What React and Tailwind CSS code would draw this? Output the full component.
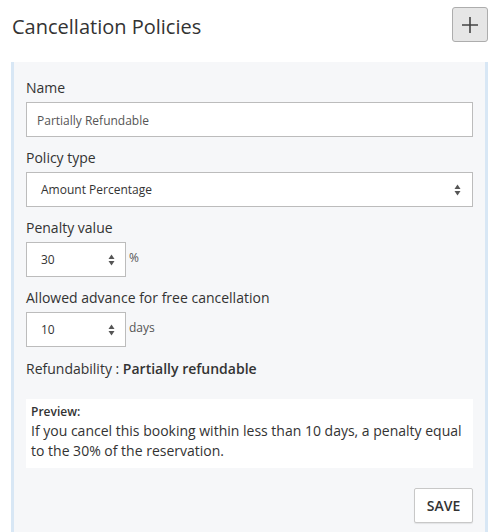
import React from 'react';

const font = { fontFamily: '"Open Sans", "Liberation Sans", sans-serif' };

function Spinner() {
  return (
    <svg width="7" height="12" viewBox="0 0 7 12" className="shrink-0">
      <path d="M3.5 0.5 L6.5 5 L0.5 5 Z" fill="#555" />
      <path d="M3.5 11.5 L6.5 7 L0.5 7 Z" fill="#555" />
    </svg>
  );
}

function NumberField({ value, unit }) {
  return (
    <div className="flex items-start">
      <div className="flex h-[35px] w-[100px] items-center justify-between border border-[#bcbcbc] bg-white pl-[14px] pr-[10px] pt-[1px] text-[12px] text-[#333]">
        <span>{value}</span>
        <Spinner />
      </div>
      <span className="ml-[3px] mt-[8px] text-[12px] leading-4 text-[#555]">{unit}</span>
    </div>
  );
}

function Label({ children }) {
  return <div className="mb-[4px] text-[14px] leading-5 text-[#333]">{children}</div>;
}

export default function App() {
  return (
    <div className="min-h-[532px] bg-white" style={font}>
      <div className="flex h-[62px] items-start justify-between pl-[12px] pr-[5px] pt-[7px]">
        <h1 className="mt-[6px] text-[20px] leading-7 text-[#333]">Cancellation Policies</h1>
        <button
          type="button"
          className="flex h-[35px] w-[36px] items-center justify-center rounded-[3px] border border-[#adadad] bg-[#e6e6e6]"
        >
          <svg width="18" height="18" viewBox="0 0 18 18">
            <path d="M9 1 V17 M1 9 H17" stroke="#444" strokeWidth="1.6" />
          </svg>
        </button>
      </div>

      <div className="ml-[11px] mr-[5px] min-h-[470px] border-x-[3px] border-[#d8e7f5] bg-[#f6f7f9] px-[12px] pb-[12px] pt-[16px]">
        <Label>Name</Label>
        <div className="flex h-[35px] items-center border border-[#bcbcbc] bg-white pl-[10px] pt-[2px] text-[12px] text-[#555]">
          Partially Refundable
        </div>

        <div className="mt-[11px]">
          <Label>Policy type</Label>
          <div className="flex h-[35px] items-center justify-between border border-[#bcbcbc] bg-white pl-[14px] pr-[11px] pt-[1px] text-[12px] text-[#333]">
            <span>Amount Percentage</span>
            <Spinner />
          </div>
        </div>

        <div className="mt-[11px]">
          <Label>Penalty value</Label>
          <NumberField value="30" unit="%" />
        </div>

        <div className="mt-[11px]">
          <Label>Allowed advance for free cancellation</Label>
          <NumberField value="10" unit="days" />
        </div>

        <div className="mt-[12px] text-[14px] leading-5 text-[#333]">
          Refundability : <span className="font-semibold">Partially refundable</span>
        </div>

        <div className="mt-[20px] bg-white pb-[7px] pl-[5px] pr-[6px] pt-[5px]">
          <div className="text-[12px] font-semibold leading-4 text-[#333]">Preview:</div>
          <p className="mt-[1px] text-[14px] leading-5 text-[#333]">
            If you cancel this booking within less than 10 days, a penalty equal to the 30% of the reservation.
          </p>
        </div>

        <div className="mt-[20px] flex justify-end">
          <button
            type="button"
            className="h-[35px] w-[59px] rounded-[2px] border border-[#c8c8c8] bg-white text-[14px] font-semibold text-[#333] shadow-[0_1px_1px_rgba(0,0,0,0.08)]"
          >
            SAVE
          </button>
        </div>
      </div>
    </div>
  );
}
